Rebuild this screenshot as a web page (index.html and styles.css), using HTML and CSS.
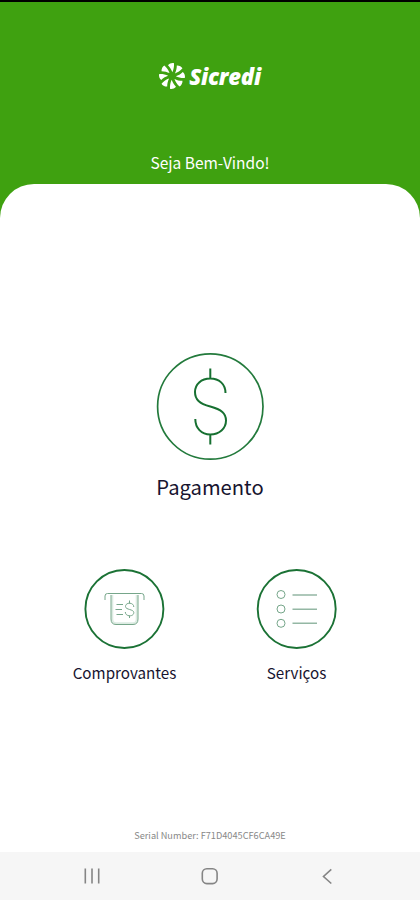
FILE: index.html
```html
<!DOCTYPE html>
<html lang="pt-BR">
<head>
  <meta charset="UTF-8">
  <meta name="viewport" content="width=device-width, initial-scale=1">
  <title>Sicredi</title>
  <link rel="stylesheet" href="styles.css">
</head>
<body>
<div class="screen">
  <header class="header">
    <div class="logo">
      <svg class="logo-mark" viewBox="-13 -13 26 26">
        <defs>
          <path id="blade" d="M.3 -3.8 C-.5 -6.2 -1.8 -8.6 -4 -10.8 C-2.4 -12.6 0 -13.4 2 -12.8 C2.2 -9.6 1.6 -6.4 .3 -3.8Z"/>
        </defs>
        <use href="#blade"/>
        <use href="#blade" transform="rotate(45)"/>
        <use href="#blade" transform="rotate(90)"/>
        <use href="#blade" transform="rotate(135)"/>
        <use href="#blade" transform="rotate(180)"/>
        <use href="#blade" transform="rotate(225)"/>
        <use href="#blade" transform="rotate(270)"/>
        <use href="#blade" transform="rotate(315)"/>
      </svg>
      <span class="logo-name">Sicredi</span>
    </div>
    <p class="welcome">Seja Bem-Vindo!</p>
  </header>

  <main class="card">
    <a class="option">
      <svg class="icon-big" viewBox="0 0 108 108">
        <circle cx="54.3" cy="54.5" r="52.7"/>
        <path class="dollar" d="M54.3 16.5V27M54.3 82V92.5M69.5 41C69.5 32 63 26.5 54.3 26.5C45 26.5 39 32.5 39 40C39 47.5 43.3 51.5 54.3 54.5C65.5 57.5 70 61.5 70 68.5C70 76.5 63.3 82.5 54.3 82.5C45.3 82.5 39.3 76 39.3 67"/>
      </svg>
      <span class="label-big">Pagamento</span>
    </a>

    <div class="options">
      <a class="option">
        <svg class="icon" viewBox="0 0 80 80">
          <circle class="ring" cx="39.4" cy="40" r="39"/>
          <path class="soft" d="M27.3 26V50Q27.3 54.2 31 54.2H48Q51.7 54.2 51.7 50V26"/>
          <path class="thin" d="M20 31V27Q20 24.5 22.5 24.5H56.5Q59 24.5 59 27V31"/>
          <path class="thin" d="M26 26V50Q26 55.5 31 55.5H48Q53 55.5 53 50V26M31.5 35.5H38M30.5 40.5H37M31.5 45.5H38"/>
          <path class="thin" d="M44.5 31.5V34.5M44.5 46.5V49M48.8 38C48.8 33 40.5 33 40.5 37.5C40.5 41 48.8 40 48.8 43.6C48.8 48 40.3 48 40.3 43"/>
        </svg>
        <span class="label">Comprovantes</span>
      </a>
      <a class="option">
        <svg class="icon" viewBox="0 0 80 80">
          <circle class="ring" cx="39.7" cy="40" r="39"/>
          <g class="thin">
            <circle cx="24" cy="25.5" r="4"/>
            <circle cx="24" cy="40" r="4"/>
            <circle cx="24" cy="54.3" r="4"/>
          </g>
          <path class="line" d="M35.5 25.9H60M35.5 40.2H60M35.5 54.3H60"/>
        </svg>
        <span class="label">Serviços</span>
      </a>
    </div>

    <p class="serial">Serial Number: F71D4045CF6CA49E</p>
  </main>

  <nav class="navbar">
    <svg viewBox="0 0 20 20"><path d="M3.3 2.5V17.5M10 2.5V17.5M16.7 2.5V17.5"/></svg>
    <svg viewBox="0 0 20 20"><rect x="2.3" y="2.8" width="14.8" height="14.8" rx="4.5"/></svg>
    <svg viewBox="0 0 20 20"><path d="M14.3 3.3L6.5 10.5L14.3 17.5"/></svg>
  </nav>
</div>
</body>
</html>
```
FILE: styles.css
```css
* {
  box-sizing: border-box;
}
body {
  margin: 0;
  font-family: "Noto Sans CJK SC", "Open Sans", sans-serif;
}
p {
  margin: 0;
}
svg {
  display: block;
  fill: none;
  overflow: visible;
}
.screen {
  display: flex;
  flex-direction: column;
  width: 420px;
  height: 900px;
  border-top: 2px solid #000;
  background: linear-gradient(#3fa110 230px, #fff 230px);
}
.header {
  display: flex;
  flex-direction: column;
  align-items: center;
  height: 182px;
  padding-top: 60px;
  color: #fff;
}
.logo {
  display: flex;
  align-items: center;
  gap: 4px;
  height: 28px;
}
.logo-mark {
  width: 26px;
  height: 26px;
  fill: #fff;
}
.logo-name {
  font-family: "Open Sans", sans-serif;
  font-size: 22px;
  font-style: italic;
  font-weight: 800;
  letter-spacing: -0.2px;
  line-height: 28px;
}
.welcome {
  margin-top: 60px;
  font-size: 15.5px;
  line-height: 24px;
}
.card {
  display: flex;
  flex-direction: column;
  align-items: center;
  flex: 1;
  padding-top: 168px;
  border-radius: 34px 34px 0 0;
  background: #fff;
}
.option {
  display: flex;
  flex-direction: column;
  align-items: center;
  color: #17142f;
}
.icon-big {
  width: 108px;
  height: 108px;
  stroke: #237a3c;
  stroke-width: 1.7;
}
.dollar {
  stroke: #177031;
  stroke-width: 2;
}
.label-big {
  margin-top: 11px;
  font-size: 20.2px;
  line-height: 32px;
}
.options {
  display: grid;
  grid-template-columns: 172px 172px;
  margin: 66px 0 0 1px;
}
.icon {
  width: 80px;
  height: 80px;
}
.ring {
  stroke: #1b7235;
  stroke-width: 1.9;
}
.thin {
  stroke: #76a68a;
  stroke-width: 1;
}
.soft {
  stroke: #dcebe2;
  stroke-width: 2;
}
.line {
  stroke: #94b7a4;
  stroke-width: 1.5;
}
.label {
  margin-top: 11px;
  font-size: 15.2px;
  line-height: 24px;
}
.serial {
  margin-top: auto;
  padding-bottom: 10px;
  color: #888;
  font-size: 9.2px;
  line-height: 14px;
}
.navbar {
  display: flex;
  justify-content: space-between;
  align-items: center;
  height: 48px;
  padding: 0 83px 0 82px;
  background: #f6f6f6;
}
.navbar svg {
  width: 20px;
  height: 20px;
  stroke: #858585;
  stroke-width: 1.6;
}
```
